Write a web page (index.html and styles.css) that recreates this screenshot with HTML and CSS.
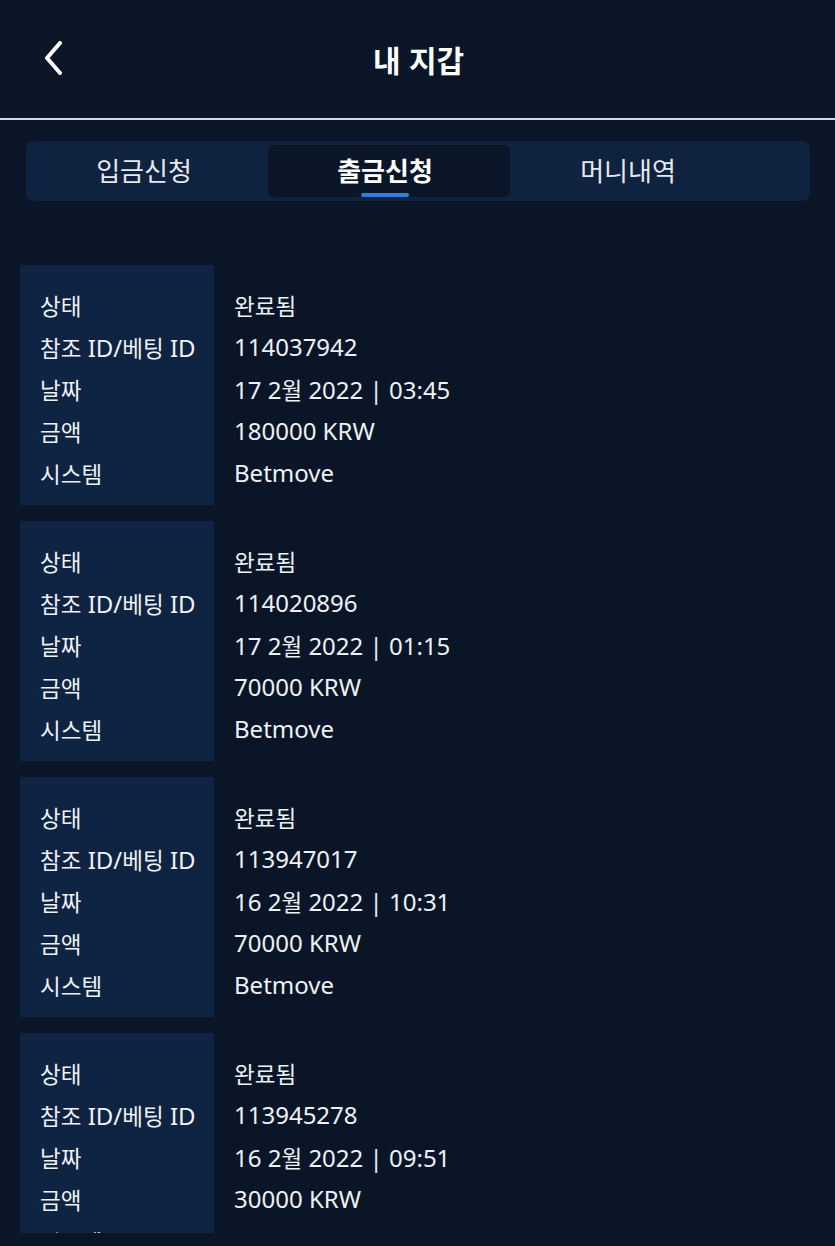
FILE: index.html
```html
<!DOCTYPE html>
<html lang="ko">
<head>
<meta charset="utf-8">
<title>내 지갑</title>
<link rel="stylesheet" href="styles.css">
</head>
<body>
<div class="app">
  <header class="header">
    <button class="back" aria-label="뒤로">
      <svg width="22" height="34" viewBox="0 0 22 34"><path d="M17 2 L4 17 L17 32" fill="none" stroke="#ffffff" stroke-width="4" stroke-linecap="round" stroke-linejoin="round"/></svg>
    </button>
    <h1 class="title">내 지갑</h1>
  </header>
  <nav class="tabs">
    <div class="tab">입금신청</div>
    <div class="tab active">출금신청<span class="indicator"></span></div>
    <div class="tab">머니내역</div>
  </nav>
  <main class="list">
    <section class="card">
      <div class="labels">
        <div class="row"><span class="ko">상태</span></div>
        <div class="row"><span class="ko">참조</span> ID/<span class="ko">베팅</span> ID</div>
        <div class="row"><span class="ko">날짜</span></div>
        <div class="row"><span class="ko">금액</span></div>
        <div class="row"><span class="ko">시스템</span></div>
      </div>
      <div class="values">
        <div class="row"><span class="ko">완료됨</span></div>
        <div class="row">114037942</div>
        <div class="row">17 2<span class="ko">월</span> 2022 | 03:45</div>
        <div class="row">180000 KRW</div>
        <div class="row">Betmove</div>
      </div>
    </section>
    <section class="card">
      <div class="labels">
        <div class="row"><span class="ko">상태</span></div>
        <div class="row"><span class="ko">참조</span> ID/<span class="ko">베팅</span> ID</div>
        <div class="row"><span class="ko">날짜</span></div>
        <div class="row"><span class="ko">금액</span></div>
        <div class="row"><span class="ko">시스템</span></div>
      </div>
      <div class="values">
        <div class="row"><span class="ko">완료됨</span></div>
        <div class="row">114020896</div>
        <div class="row">17 2<span class="ko">월</span> 2022 | 01:15</div>
        <div class="row">70000 KRW</div>
        <div class="row">Betmove</div>
      </div>
    </section>
    <section class="card">
      <div class="labels">
        <div class="row"><span class="ko">상태</span></div>
        <div class="row"><span class="ko">참조</span> ID/<span class="ko">베팅</span> ID</div>
        <div class="row"><span class="ko">날짜</span></div>
        <div class="row"><span class="ko">금액</span></div>
        <div class="row"><span class="ko">시스템</span></div>
      </div>
      <div class="values">
        <div class="row"><span class="ko">완료됨</span></div>
        <div class="row">113947017</div>
        <div class="row">16 2<span class="ko">월</span> 2022 | 10:31</div>
        <div class="row">70000 KRW</div>
        <div class="row">Betmove</div>
      </div>
    </section>
    <section class="card">
      <div class="labels">
        <div class="row"><span class="ko">상태</span></div>
        <div class="row"><span class="ko">참조</span> ID/<span class="ko">베팅</span> ID</div>
        <div class="row"><span class="ko">날짜</span></div>
        <div class="row"><span class="ko">금액</span></div>
        <div class="row"><span class="ko">시스템</span></div>
      </div>
      <div class="values">
        <div class="row"><span class="ko">완료됨</span></div>
        <div class="row">113945278</div>
        <div class="row">16 2<span class="ko">월</span> 2022 | 09:51</div>
        <div class="row">30000 KRW</div>
        <div class="row">Betmove</div>
      </div>
    </section>
  </main>
</div>
</body>
</html>
```

FILE: styles.css
```css
* { box-sizing: border-box; }

html, body {
  margin: 0;
  padding: 0;
  background: #0a1628;
}

body {
  font-family: "Noto Sans", "Noto Sans CJK KR", sans-serif;
  color: #eef1f5;
  height: 1246px;
  overflow: hidden;
}

.app {
  display: flex;
  flex-direction: column;
  height: 1233px;
  overflow: hidden;
}

.header {
  height: 120px;
  flex: none;
  display: flex;
  align-items: center;
  justify-content: center;
  border-bottom: 2px solid #d6d8dc;
  position: relative;
}

.back {
  position: absolute;
  left: 43px;
  top: 41px;
  background: none;
  border: 0;
  padding: 0;
  width: 22px;
  height: 34px;
  display: block;
}

.back svg { display: block; }

.title {
  margin: 0;
  font-family: "Noto Sans CJK KR", sans-serif;
  font-size: 30px;
  font-weight: 700;
  color: #ffffff;
  line-height: 1;
  padding-left: 2px;
}

.tabs {
  flex: none;
  margin: 21px 25px 0 26px;
  height: 60px;
  background: #0f2240;
  border-radius: 8px;
  display: flex;
  align-items: center;
}

.tab {
  width: 242px;
  height: 52px;
  display: flex;
  align-items: center;
  justify-content: center;
  font-family: "Noto Sans CJK KR", sans-serif;
  font-size: 26px;
  color: #e6e9ee;
  position: relative;
  padding-right: 6px;
  padding-bottom: 4px;
}

.tab.active {
  background: #0a1628;
  border-radius: 6px;
  font-weight: 700;
  color: #ffffff;
  padding-right: 8px;
}

.indicator {
  position: absolute;
  left: 93px;
  bottom: 0;
  width: 48px;
  height: 4px;
  border-radius: 2px;
  background: #2f7ee3;
}

.list {
  flex: 1;
  padding: 64px 0 0 20px;
  display: flex;
  flex-direction: column;
  gap: 16px;
}

.card {
  flex: none;
  display: flex;
}

.labels {
  width: 194px;
  background: #0f2342;
  padding: 19px 0 11px 20px;
}

.values {
  padding: 19px 0 11px 20px;
}

.row {
  height: 42px;
  font-size: 24px;
  line-height: 42px;
  white-space: nowrap;
}

.ko {
  font-family: "Noto Sans CJK KR", sans-serif;
  font-size: 22.5px;
}
```
